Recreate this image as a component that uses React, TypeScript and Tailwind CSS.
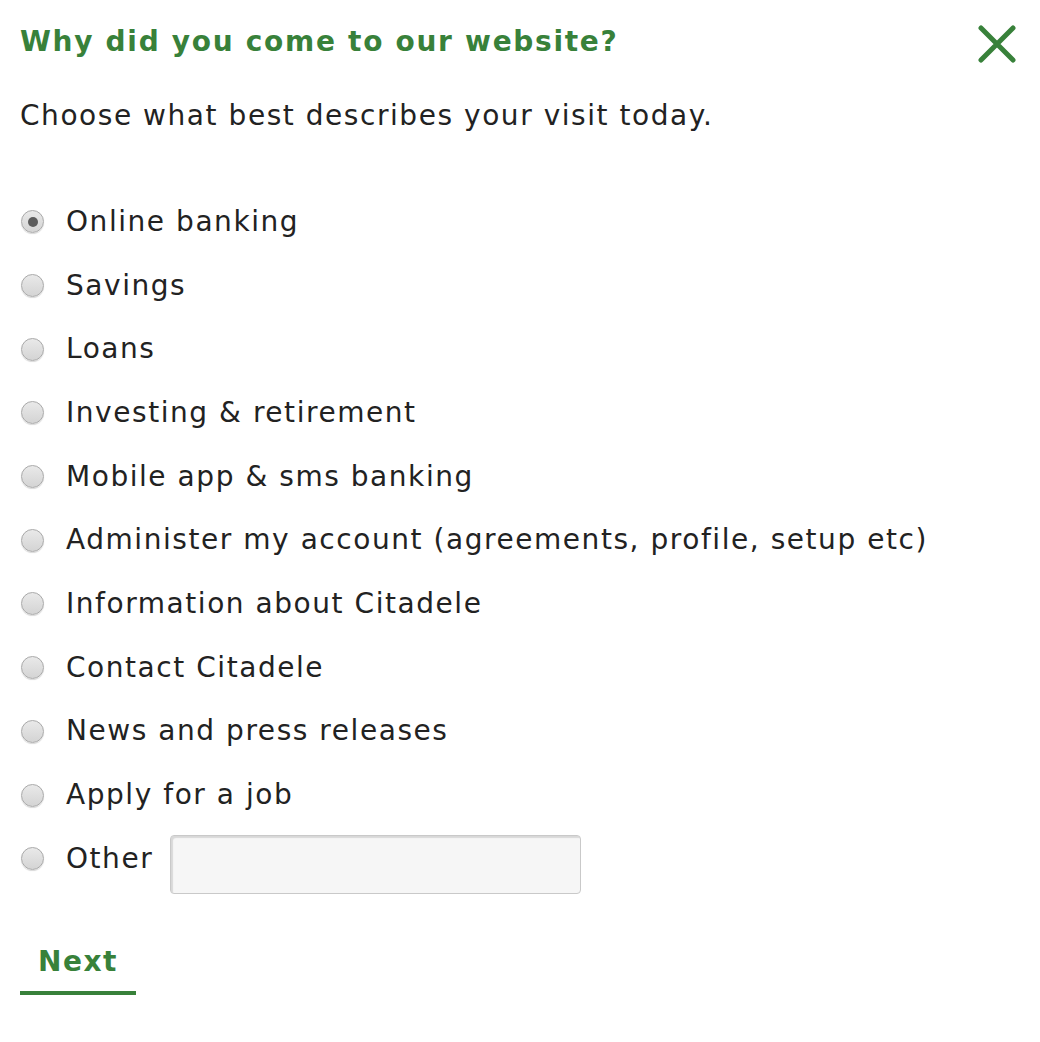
import { useState } from "react";

const options = [
  "Online banking",
  "Savings",
  "Loans",
  "Investing & retirement",
  "Mobile app & sms banking",
  "Administer my account (agreements, profile, setup etc)",
  "Information about Citadele",
  "Contact Citadele",
  "News and press releases",
  "Apply for a job",
];

const Radio = ({ checked }: { checked: boolean }) => (
  <span className="relative flex h-[23px] w-[23px] shrink-0 items-center justify-center rounded-full border border-[#a9a9a9] bg-gradient-to-b from-[#e9e9e9] to-[#d4d4d4] shadow-[0_1px_1px_rgba(0,0,0,0.15)]">
    {checked && <span className="h-[10px] w-[10px] rounded-full bg-[#5c5c5c]" />}
  </span>
);

const App = () => {
  const [selected, setSelected] = useState(0);

  return (
    <div className="min-h-screen bg-white px-5 pt-[22px] font-['DejaVu_Sans',Verdana,sans-serif] tracking-[1.55px] text-[#222]">
      {/* Header */}
      <div className="flex items-start justify-between">
        <h1 className="text-[28px] font-bold leading-[40px] tracking-[1.7px] text-[#38813a]">
          Why did you come to our website?
        </h1>
        <button className="mr-[4px] mt-[3px]" aria-label="Close">
          <svg width="38" height="38" viewBox="0 0 38 38">
            <path d="M3 3 L35 35 M35 3 L3 35" stroke="#38813a" strokeWidth="5" strokeLinecap="round" />
          </svg>
        </button>
      </div>

      <p className="mt-[33px] text-[28px] leading-[40px]">Choose what best describes your visit today.</p>

      {/* Options */}
      <ul className="mt-[54px] flex flex-col">
        {options.map((label, i) => (
          <li
            key={label}
            className="flex h-[63.7px] cursor-pointer items-center gap-[22px] pl-[1px]"
            onClick={() => setSelected(i)}
          >
            <Radio checked={selected === i} />
            <span className="text-[28px] leading-[40px]">{label}</span>
          </li>
        ))}
        <li className="flex h-[63.7px] items-center pl-[1px]" onClick={() => setSelected(options.length)}>
          <Radio checked={selected === options.length} />
          <span className="ml-[22px] text-[28px] leading-[40px]">Other</span>
          <input
            type="text"
            className="ml-[17px] mt-[11px] h-[59px] w-[411px] rounded-[4px] border border-[#c9c9c9] bg-[#f6f6f6] px-3 text-[24px] shadow-[inset_2px_2px_1px_rgba(0,0,0,0.12)] outline-none"
          />
        </li>
      </ul>

      {/* Next */}
      <button className="mt-[51px] w-[116px] border-b-4 border-[#38813a] pb-[9px] text-center text-[28px] font-bold leading-[40px] text-[#38813a]">
        Next
      </button>
    </div>
  );
};

export default App;
